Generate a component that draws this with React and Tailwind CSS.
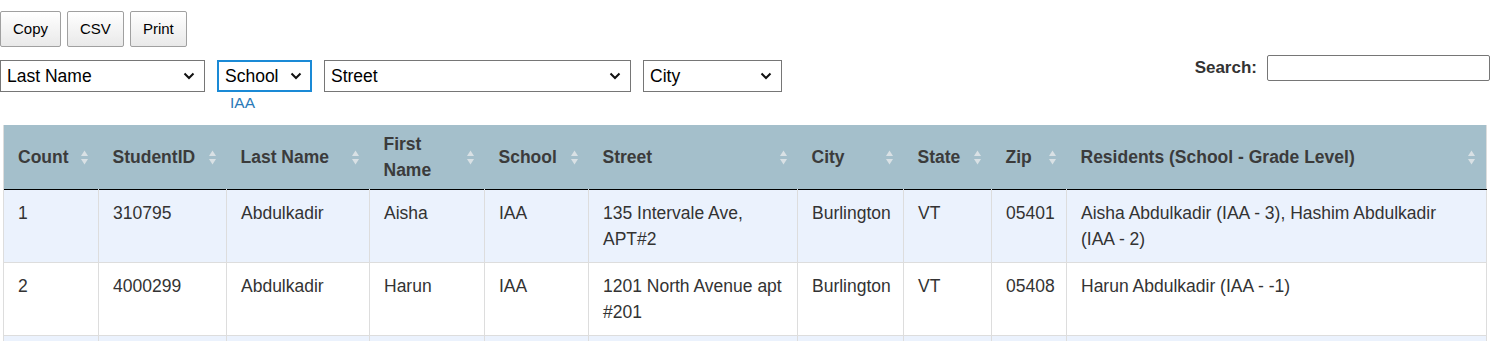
import { useState } from "react";

const columns = [
  { label: "Count", width: 95 },
  { label: "StudentID", width: 128 },
  { label: "Last Name", width: 143 },
  { label: "First Name", width: 115 },
  { label: "School", width: 104 },
  { label: "Street", width: 209 },
  { label: "City", width: 106 },
  { label: "State", width: 88 },
  { label: "Zip", width: 75 },
  { label: "Residents (School - Grade Level)", width: 420 },
];

const rows = [
  ["1", "310795", "Abdulkadir", "Aisha", "IAA", "135 Intervale Ave, APT#2", "Burlington", "VT", "05401", "Aisha Abdulkadir (IAA - 3), Hashim Abdulkadir (IAA - 2)"],
  ["2", "4000299", "Abdulkadir", "Harun", "IAA", "1201 North Avenue apt #201", "Burlington", "VT", "05408", "Harun Abdulkadir (IAA - -1)"],
  ["3", "4000312", "Abdullahi", "Amina", "IAA", "36 Elmwood Ave", "Burlington", "VT", "05401", "Amina Abdullahi (IAA - 4)"],
];

const SortIcon = () => (
  <svg width="9" height="17" viewBox="0 0 9 17" className="shrink-0">
    <path d="M4.5 1.5 L8 7 L1 7 Z" fill="#d9e1e5" />
    <path d="M4.5 15.5 L8 10 L1 10 Z" fill="#d9e1e5" />
  </svg>
);

const Chevron = () => (
  <svg width="12" height="8" viewBox="0 0 12 8" className="pointer-events-none absolute right-[10px] top-1/2 -translate-y-1/2">
    <path d="M1.5 1.5 L6 6 L10.5 1.5" fill="none" stroke="#111" strokeWidth="2" />
  </svg>
);

const Filter = ({ label, width, focused, note }) => (
  <div className="flex flex-col items-start">
    <div className="relative" style={{ width }}>
      <select
        defaultValue={label}
        className={`h-8 w-full appearance-none bg-white pl-[6px] text-[17.5px] text-black outline-none ${
          focused ? "border-2 border-[#1a8ad6]" : "border border-[#767676]"
        }`}
      >
        <option>{label}</option>
      </select>
      <Chevron />
    </div>
    {note && <span className="mt-[2px] pl-[13px] text-[15.5px] leading-[18px] text-[#2a7ab8]">{note}</span>}
  </div>
);

export default function App() {
  const [query, setQuery] = useState("");

  return (
    <div className="min-h-[341px] bg-white font-['Liberation_Sans',Arial,sans-serif] text-[#333]">
      <div className="flex gap-[6px] pt-[11px]">
        {["Copy", "CSV", "Print"].map((b) => (
          <button
            key={b}
            className="h-9 rounded-[2px] border border-[#a0a0a0] bg-gradient-to-b from-white to-[#e9e9e9] px-[12px] text-[15px] text-black"
          >
            {b}
          </button>
        ))}
      </div>

      <div className="mt-[8px] flex items-start justify-between pr-[8px]">
        <div className="mt-[5px] flex items-start gap-[12px]">
          <Filter label="Last Name" width={205} />
          <Filter label="School" width={95} focused note="IAA" />
          <Filter label="Street" width={307} />
          <Filter label="City" width={139} />
        </div>
        <label className="flex items-center gap-[10px] text-[17px] font-bold text-[#333]">
          Search:
          <input
            value={query}
            onChange={(e) => setQuery(e.target.value)}
            className="h-[26px] w-[223px] rounded-[2px] border border-[#767676] bg-white px-1 text-[14px] font-normal outline-none"
          />
        </label>
      </div>

      <div className="mt-[13px] pl-[3px] pr-[11px]">
        <table className="w-full table-fixed border-collapse border-x border-[#ddd] text-[17.5px] leading-[26px]">
          <colgroup>
            {columns.map((c) => (
              <col key={c.label} style={{ width: c.width }} />
            ))}
          </colgroup>
          <thead>
            <tr className="border-b border-black bg-[#a4bfcb]">
              {columns.map((c) => (
                <th key={c.label} className="py-[6px] pl-[14px] pr-[10px] text-left align-middle font-bold text-[#3b3b3b]">
                  <div className="flex items-center justify-between gap-2">
                    <span>{c.label}</span>
                    <SortIcon />
                  </div>
                </th>
              ))}
            </tr>
          </thead>
          <tbody>
            {rows.map((r, i) => (
              <tr key={i} className={`border-b border-[#ddd] ${i % 2 === 0 ? "bg-[#ebf2fd]" : "bg-white"}`}>
                {r.map((v, j) => (
                  <td
                    key={j}
                    className={`border-l border-[#ddd] py-[10px] pl-[14px] align-top text-[#333] ${
                      j === r.length - 1 ? "pr-[40px]" : "pr-[10px]"
                    }`}
                  >
                    {v}
                  </td>
                ))}
              </tr>
            ))}
          </tbody>
        </table>
      </div>
    </div>
  );
}
